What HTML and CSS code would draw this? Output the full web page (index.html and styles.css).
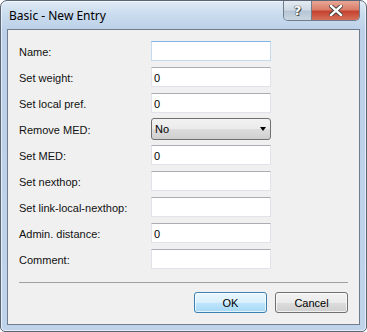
FILE: index.html
```html
<!DOCTYPE html>
<html lang="en">
<head>
    <meta charset="UTF-8">
    <title>Basic - New Entry</title>
    <link rel="stylesheet" href="styles.css">
</head>
<body>
    <div class="window">
        <div class="titlebar">
            <span class="title">Basic - New Entry</span>
            <div class="caption-buttons">
                <div class="cap-btn help">?</div>
                <div class="cap-btn close">
                    <svg width="14" height="11" viewBox="0 0 14 11">
                        <path d="M2 1 L12 10 M12 1 L2 10" stroke="#3a3a3a" stroke-width="4.2" stroke-linecap="square"/>
                        <path d="M2 1 L12 10 M12 1 L2 10" stroke="#ffffff" stroke-width="2.4" stroke-linecap="square"/>
                    </svg>
                </div>
            </div>
        </div>

        <div class="client">
            <div class="form">
                <label>Name:</label>
                <div class="field focus"></div>

                <label>Set weight:</label>
                <div class="field">0</div>

                <label>Set local pref.</label>
                <div class="field">0</div>

                <label>Remove MED:</label>
                <div class="combo">
                    <span>No</span>
                    <span class="arrow"></span>
                </div>

                <label>Set MED:</label>
                <div class="field">0</div>

                <label>Set nexthop:</label>
                <div class="field"></div>

                <label>Set link-local-nexthop:</label>
                <div class="field"></div>

                <label>Admin. distance:</label>
                <div class="field">0</div>

                <label>Comment:</label>
                <div class="field"></div>
            </div>

            <div class="separator"></div>

            <div class="buttons">
                <button class="btn default">OK</button>
                <button class="btn">Cancel</button>
            </div>
        </div>
    </div>
</body>
</html>
```

FILE: styles.css
```css
* {
    margin: 0;
    padding: 0;
    box-sizing: border-box;
}

body {
    width: 367px;
    height: 332px;
    overflow: hidden;
    font-family: "Liberation Sans", Arial, sans-serif;
    font-size: 11px;
    color: #000;
}

.window {
    width: 367px;
    height: 332px;
    border: 1px solid #5a6675;
    border-radius: 7px 7px 5px 5px;
    background: linear-gradient(180deg, #dfeaf6 0px, #c9dbee 14px, #bcd1e9 28px, #bfd4eb 100%);
    display: flex;
    flex-direction: column;
    padding: 0 6px 6px;
    box-shadow: inset 0 0 0 1px rgba(255, 255, 255, 0.6);
}

.titlebar {
    height: 28px;
    display: flex;
    align-items: flex-start;
}

.title {
    font-family: "Noto Sans", "Open Sans", sans-serif;
    font-size: 12px;
    line-height: 14px;
    margin-top: 8px;
    margin-left: 2px;
    color: #000;
}

.caption-buttons {
    margin-left: auto;
    display: flex;
    height: 20px;
    border: 1px solid #6f7d8d;
    border-top: none;
    border-radius: 0 0 5px 5px;
    overflow: hidden;
}

.cap-btn {
    height: 19px;
    display: flex;
    align-items: center;
    justify-content: center;
}

.help {
    width: 28px;
    background: linear-gradient(180deg, #e4ebf2 0%, #cfdae5 45%, #b7c6d5 55%, #c9d6e2 100%);
    border-right: 1px solid #6f7d8d;
    font-family: "DejaVu Sans", sans-serif;
    font-size: 13px;
    font-weight: bold;
    color: #fff;
    text-shadow: 0 0 1px #333, 0 0 1px #333, 1px 1px 0 #555;
}

.close {
    width: 47px;
    background: linear-gradient(180deg, #e8a796 0%, #d97e6a 45%, #c5432f 55%, #d6705a 100%);
}

.client {
    flex: 1;
    background: #f0f0f0;
    border: 1px solid #6e7c8c;
    display: flex;
    flex-direction: column;
    padding: 11px 11px 0;
}

.form {
    display: grid;
    grid-template-columns: 132px 120px;
    grid-auto-rows: 20px;
    row-gap: 6px;
    align-items: center;
}

.form label {
    padding-top: 1px;
    color: #111;
}

.field {
    height: 20px;
    background: #fff;
    border: 1px solid #e2e3ea;
    border-top-color: #abadb3;
    padding: 3px 2px 0;
    line-height: 14px;
}

.field.focus {
    border-color: #c5daed;
    border-top-color: #7eb4ea;
}

.combo {
    height: 22px;
    border: 1px solid #707070;
    border-radius: 3px;
    background: linear-gradient(180deg, #f2f2f2 0%, #ebebeb 50%, #dddddd 50%, #cfcfcf 100%);
    display: flex;
    align-items: center;
    justify-content: space-between;
    padding: 0 4px 0 3px;
}

.arrow {
    width: 0;
    height: 0;
    border-left: 3.5px solid transparent;
    border-right: 3.5px solid transparent;
    border-top: 4px solid #000;
}

.separator {
    height: 1px;
    background: #a0a0a0;
    margin-top: 13px;
}

.buttons {
    display: flex;
    justify-content: flex-end;
    gap: 8px;
    margin-top: 9px;
}

.btn {
    width: 73px;
    height: 21px;
    font-family: "Liberation Sans", Arial, sans-serif;
    font-size: 11px;
    color: #000;
    border: 1px solid #707070;
    border-radius: 3px;
    background: linear-gradient(180deg, #f2f2f2 0%, #ebebeb 50%, #dddddd 50%, #cfcfcf 100%);
    box-shadow: inset 0 0 0 1px rgba(255, 255, 255, 0.7);
}

.btn.default {
    border-color: #3c7fb1;
    background: linear-gradient(180deg, #eaf6fd 0%, #d9f0fc 50%, #bee6fd 50%, #a7d9f5 100%);
}
```
